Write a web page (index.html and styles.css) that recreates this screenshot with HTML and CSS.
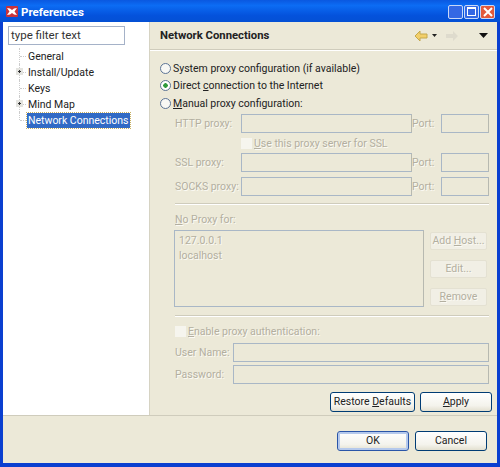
FILE: index.html
```html
<!DOCTYPE html>
<html lang="en">
  <head>
    <meta charset="utf-8">
    <title>Preferences</title>
    <link rel="stylesheet" href="styles.css">
  </head>
  <body>
    <div class="window">
      <div class="titlebar">
        <svg class="app-icon" width="12" height="11" viewBox="0 0 12 11">
          <rect width="12" height="11" rx="1" fill="#c8323a"/>
          <path d="M1 2l3 .5L6 4l2-1.500L11 2 8.500 5.500 11 9l-3-.5L6 7 4 8.500 1 9l2.500-3.500z" fill="#fff"/>
        </svg>
        <span class="title-text">Preferences</span>
        <div class="win-buttons">
          <span class="win-btn"></span>
          <span class="win-btn"><i class="max-mark"></i></span>
          <span class="win-btn close-btn">
            <svg width="10" height="10" viewBox="0 0 10 10"><path d="M1 1l8 8M9 1l-8 8" stroke="#fff" stroke-width="2"/></svg>
          </span>
        </div>
      </div>
      <div class="client">
        <div class="main">
          <div class="sidebar">
            <div class="filter">type filter text</div>
            <ul class="tree">
              <li class="tree-row"><span class="twist"></span><span class="tree-label">General</span></li>
              <li class="tree-row"><span class="twist plus"></span><span class="tree-label">Install/Update</span></li>
              <li class="tree-row"><span class="twist"></span><span class="tree-label">Keys</span></li>
              <li class="tree-row"><span class="twist plus"></span><span class="tree-label">Mind Map</span></li>
              <li class="tree-row"><span class="twist last"></span><span class="tree-label selected">Network Connections</span></li>
            </ul>
          </div>
          <div class="page">
            <div class="page-head">
              <span class="page-title">Network Connections</span>
              <div class="nav-icons">
                <svg width="14" height="12" viewBox="0 0 14 12"><path d="M1 6l5-5v3h7v4H6v3z" fill="#f2cf6a" stroke="#c4a84c"/></svg>
                <svg width="5" height="3" viewBox="0 0 5 3"><path d="M0 0h5L2.500 3z" fill="#222"/></svg>
                <svg class="nav-off" width="12" height="10" viewBox="0 0 12 10"><path d="M0 3h7V0l5 5-5 5V7H0z" fill="#dedbcd"/></svg>
                <svg class="nav-menu" width="9" height="5" viewBox="0 0 9 5"><path d="M0 0h9L4.500 5z" fill="#111"/></svg>
              </div>
            </div>
            <div class="rule"></div>
            <div class="page-body">
              <div class="radio-row"><span class="radio"></span><span>System proxy configuration (if available)</span></div>
              <div class="radio-row"><span class="radio on"></span><span>Direct <u>c</u>onnection to the Internet</span></div>
              <div class="radio-row"><span class="radio"></span><span><u>M</u>anual proxy configuration:</span></div>

              <div class="proxy-grid">
                <span class="off-text">HTTP proxy:</span><div class="field"></div><span class="off-text">Port:</span><div class="field"></div>
                <div class="check-row ssl-check"><span class="check"></span><span class="off-text"><u>U</u>se this proxy server for SSL</span></div>
                <span class="off-text">SSL proxy:</span><div class="field"></div><span class="off-text">Port:</span><div class="field"></div>
                <span class="off-text">SOCKS proxy:</span><div class="field"></div><span class="off-text">Port:</span><div class="field"></div>
              </div>
              <div class="rule thin"></div>

              <div class="off-text noproxy-label"><u>N</u>o Proxy for:</div>
              <div class="noproxy">
                <div class="field hostlist">
                  <div class="off-text">127.0.0.1</div>
                  <div class="off-text">localhost</div>
                </div>
                <div class="host-btns">
                  <div class="off-btn off-text">Add <u>H</u>ost...</div>
                  <div class="off-btn off-text">Edit...</div>
                  <div class="off-btn off-text"><u>R</u>emove</div>
                </div>
              </div>
              <div class="rule thin low"></div>

              <div class="check-row auth-check"><span class="check"></span><span class="off-text"><u>E</u>nable proxy authentication:</span></div>
              <div class="auth-grid">
                <span class="off-text">User Name:</span><div class="field"></div>
                <span class="off-text">Password:</span><div class="field"></div>
              </div>
              <div class="page-btns">
                <div class="btn restore">Restore <u>D</u>efaults</div>
                <div class="btn apply"><u>A</u>pply</div>
              </div>
            </div>
          </div>
        </div>
        <div class="footer">
          <div class="btn ok">OK</div>
          <div class="btn cancel">Cancel</div>
        </div>
      </div>
    </div>
  </body>
</html>
```
FILE: styles.css
```css
* {
  box-sizing: border-box;
}
body {
  margin: 0;
  font-family: Roboto, "Liberation Sans", sans-serif;
  font-size: 10.5px;
  color: #222;
}
.window {
  width: 500px;
  height: 467px;
  display: flex;
  flex-direction: column;
  background: #0a3fd0;
  padding: 0 3px 4px;
  overflow: hidden;
}
.titlebar {
  height: 22px;
  margin: 0 -3px;
  padding: 1px 5px 0 6px;
  display: flex;
  align-items: center;
  gap: 3px;
  background: linear-gradient(#0a58e0, #0c6cf4 25%, #0452dc 70%, #0450d4);
}
.title-text {
  color: #fff;
  font-weight: 700;
  font-size: 11.5px;
}
.win-buttons {
  margin-left: auto;
  display: flex;
  gap: 1px;
}
.win-btn {
  width: 15px;
  height: 14px;
  border: 1px solid #c9d8f8;
  border-radius: 2px;
  background: #3468e4;
  display: flex;
  align-items: center;
  justify-content: center;
}
.close-btn {
  background: #e2593c;
}
.max-mark {
  width: 9px;
  height: 9px;
  border: 1px solid #fff;
  border-top-width: 2px;
}
.client {
  flex: 1;
  display: flex;
  flex-direction: column;
  background: #ece9d8;
}
.main {
  height: 394px;
  display: flex;
  border-bottom: 1px solid #cfccbc;
}
.sidebar {
  width: 146px;
  background: #fff;
  padding: 4px 0 0 5px;
}
.filter {
  width: 117px;
  height: 19px;
  border: 1px solid #a5b2c8;
  line-height: 17px;
  padding-left: 2px;
  font-size: 11.5px;
  color: #333;
}
.tree {
  list-style: none;
  margin: 3px 0 0;
  padding: 0;
}
.tree-row {
  height: 16px;
  display: flex;
  align-items: center;
}
.twist {
  position: relative;
  width: 8px;
  height: 16px;
  margin-left: 11px;
  flex: none;
  border-left: 1px dotted #ccc;
}
.twist::after {
  content: "";
  position: absolute;
  left: 0;
  top: 8px;
  width: 6px;
  border-top: 1px dotted #ccc;
}
.twist.last {
  height: 8px;
  align-self: flex-start;
}
.twist.plus::before {
  content: "";
  position: absolute;
  left: -4px;
  top: 4px;
  width: 7px;
  height: 7px;
  z-index: 1;
  background:
    linear-gradient(#333, #333) center / 3px 1px no-repeat,
    linear-gradient(#333, #333) center / 1px 3px no-repeat,
    #e4e4e0;
}
.tree-label {
  padding: 0 1px;
  line-height: 15px;
  white-space: nowrap;
}
.selected {
  background: #316ac5;
  color: #fff;
  outline: 1px dotted #c8b060;
}
.page {
  flex: 1;
  border-left: 1px solid #d6d3c3;
  display: flex;
  flex-direction: column;
  min-width: 0;
}
.page-head {
  height: 27px;
  padding: 0 9px 0 10px;
  display: flex;
  align-items: center;
  justify-content: space-between;
}
.page-title {
  font-weight: 700;
  font-size: 11.3px;
}
.nav-icons {
  display: flex;
  align-items: center;
  gap: 4px;
}
.nav-off {
  margin-left: 5px;
}
.nav-menu {
  margin-left: 17px;
}
.rule {
  border-top: 1px solid #cfccbc;
  border-bottom: 1px solid #fff;
  height: 2px;
  flex: none;
}
.page-body {
  flex: 1;
  padding: 8.500px 10px 0 10px;
  display: flex;
  flex-direction: column;
}
.radio-row {
  height: 17.5px;
  display: flex;
  align-items: center;
  gap: 2px;
  white-space: nowrap;
}
.radio {
  width: 11px;
  height: 11px;
  border-radius: 50%;
  border: 1px solid #5d7596;
  background: #f8f8f4;
  flex: none;
}
.radio.on {
  background: radial-gradient(circle, #2f9a3c 2px, #fff 2.500px);
}
.off-text {
  color: #b3afa0;
  text-shadow: 1px 1px 0 #fbfaf4;
  white-space: nowrap;
}
.field {
  border: 1px solid #a9b7c6;
  border-right-color: #b7b9b0;
  height: 19px;
}
.proxy-grid {
  margin: 2px 0 0 15px;
  display: grid;
  grid-template-columns: 66px 171px 29px 48px;
  align-items: center;
  row-gap: 5px;
}
.ssl-check {
  grid-column: 2 / 5;
  height: 10px;
}
.check-row {
  display: flex;
  align-items: center;
  gap: 2px;
}
.check {
  width: 11px;
  height: 11px;
  background: #f6f5ee;
  flex: none;
}
.thin {
  margin: 7px 0 0 15px;
  width: 314px;
}
.thin.low {
  margin-top: 8px;
}
.noproxy-label {
  margin: 7px 0 0 15px;
  height: 18px;
  line-height: 15px;
}
.noproxy {
  margin-left: 14px;
  display: flex;
  gap: 6px;
  height: 77px;
}
.hostlist {
  width: 250px;
  height: 77px;
  padding: 2px 4px;
  line-height: 15px;
}
.host-btns {
  width: 57px;
  padding-top: 2px;
  display: flex;
  flex-direction: column;
  gap: 10px;
}
.off-btn {
  height: 18px;
  background: #f1efe5;
  border: 1px solid #e4e1d2;
  border-radius: 2px;
  line-height: 16px;
  text-align: center;
}
.auth-check {
  margin: 6px 0 0 15px;
  height: 17px;
}
.auth-grid {
  margin: 3px 0 0 15px;
  display: grid;
  grid-template-columns: 58px 256px;
  align-items: center;
  row-gap: 3px;
}
.page-btns {
  margin: 8px -5px 0 0;
  display: flex;
  justify-content: flex-end;
  gap: 5px;
}
.btn {
  height: 20px;
  background: linear-gradient(#fff, #f4f3ec 70%, #e3e0d0);
  border: 1px solid #003c74;
  border-radius: 3px;
  text-align: center;
  line-height: 18px;
  color: #222;
  white-space: nowrap;
}
.restore {
  width: 85px;
}
.apply {
  width: 72px;
}
.footer {
  flex: 1;
  padding: 15px 10px 0 0;
  display: flex;
  justify-content: flex-end;
  gap: 6px;
}
.ok,
.cancel {
  width: 72px;
}
.ok {
  border-color: #2a55a8;
  box-shadow: inset 0 0 0 2px #b5c9ec;
}
```
